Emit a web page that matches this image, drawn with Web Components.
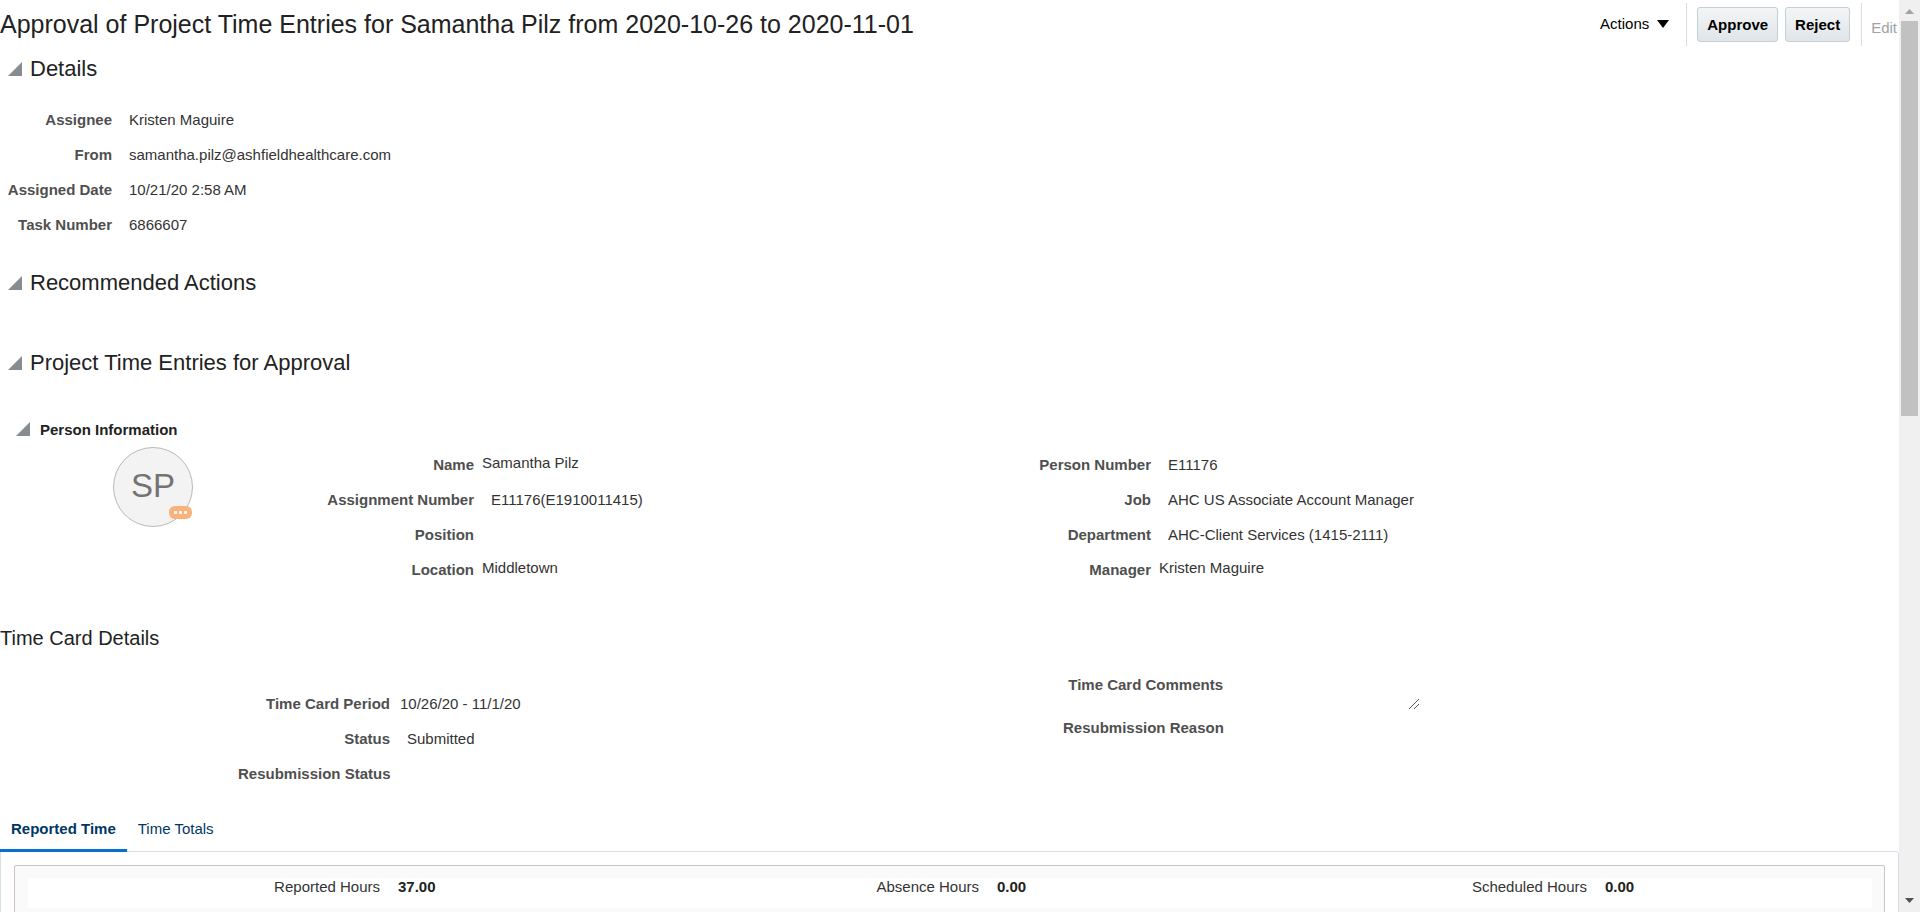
<!DOCTYPE html>
<html lang="en">
<head>
<meta charset="utf-8">
<meta name="viewport" content="width=device-width, initial-scale=1">
<title>Approval of Project Time Entries</title>
<style>
  body { margin: 0; background: #fff; color: #333; font: 15px "Liberation Sans", Arial, sans-serif; }
  .details { padding: 13px 0 21px; --label-width: 112px; }
  .empty { padding-bottom: 40px; }
  .gap { padding-bottom: 29px; }
  .person { display: grid; grid-template-columns: 327fr 712fr 860fr; padding-bottom: 36px; }
  .person person-avatar { margin-left: 113px; }
  .person .left { --label-width: 147px; }
  .person .right { --label-width: 112px; }
  h2 { margin: 0; font-size: 20px; line-height: 30px; font-weight: 400; color: #222; }
  .card { display: grid; grid-template-columns: 238fr 825fr 836fr; padding-bottom: 20px; }
  .card .left { grid-column: 2; padding-top: 33px; --label-width: 152px; }
  .card .right { padding-top: 14px; --label-width: 160px; }
</style>
</head>
<body>
<approval-page>
  <task-header>Approval of Project Time Entries for Samantha Pilz from 2020-10-26 to 2020-11-01</task-header>
  <section-header>Details</section-header>
  <div class="details">
    <field-row label="Assignee">Kristen Maguire</field-row>
    <field-row label="From">samantha.pilz@ashfieldhealthcare.com</field-row>
    <field-row label="Assigned Date">10/21/20 2:58 AM</field-row>
    <field-row label="Task Number">6866607</field-row>
  </div>
  <section-header class="empty">Recommended Actions</section-header>
  <section-header class="gap">Project Time Entries for Approval</section-header>
  <section-header minor>Person Information</section-header>
  <div class="person">
    <person-avatar>SP</person-avatar>
    <div class="left">
      <field-row label="Name" linked>Samantha Pilz</field-row>
      <field-row label="Assignment Number">E11176(E1910011415)</field-row>
      <field-row label="Position"></field-row>
      <field-row label="Location" linked>Middletown</field-row>
    </div>
    <div class="right">
      <field-row label="Person Number">E11176</field-row>
      <field-row label="Job">AHC US Associate Account Manager</field-row>
      <field-row label="Department">AHC-Client Services (1415-2111)</field-row>
      <field-row label="Manager" linked>Kristen Maguire</field-row>
    </div>
  </div>
  <h2>Time Card Details</h2>
  <div class="card">
    <div class="left">
      <field-row label="Time Card Period" near>10/26/20 - 11/1/20</field-row>
      <field-row label="Status">Submitted</field-row>
      <field-row label="Resubmission Status"></field-row>
    </div>
    <div class="right">
      <comment-row label="Time Card Comments"></comment-row>
      <field-row label="Resubmission Reason"></field-row>
    </div>
  </div>
  <time-tabs></time-tabs>
  <hours-summary></hours-summary>
</approval-page>

<script>
const define = (name, html, setup) => {
  const template = document.createElement('template');
  template.innerHTML = html;
  customElements.define(name, class extends HTMLElement {
    constructor() {
      super();
      this.attachShadow({ mode: 'open' }).append(template.content.cloneNode(true));
    }
    connectedCallback() { if (setup) setup(this, this.shadowRoot); }
  });
};
const setLabel = (host, root) => {
  root.querySelector('.label').textContent = host.getAttribute('label');
};

define('approval-page', `
  <style>
    :host { display: flex; height: 100vh; overflow: hidden; }
    main { flex: 1; min-width: 0; overflow-y: auto; scrollbar-width: none; }
  </style>
  <main><slot></slot></main>
  <page-scrollbar></page-scrollbar>`);

define('page-scrollbar', `
  <style>
    :host { display: flex; flex-direction: column; width: 21px; background: #f0f0f0; }
    svg { display: block; width: 21px; height: 21px; }
    .track { flex: 1; display: grid; grid-template-rows: 395fr 475fr; padding: 0 2px; }
    .thumb { background: #c1c1c1; }
  </style>
  <svg viewBox="0 0 21 21" aria-hidden="true"><path d="M6 14h9L10.500 9z" fill="#a3a3a3"/></svg>
  <div class="track"><div class="thumb"></div></div>
  <svg viewBox="0 0 21 21" aria-hidden="true"><path d="M6 7h9l-4.500 5z" fill="#505050"/></svg>`);

define('task-header', `
  <style>
    :host { display: flex; justify-content: space-between; min-height: 49px; }
    h1 { margin: 0; font-size: 25px; line-height: 48px; font-weight: 400; color: #222; white-space: nowrap; }
    .bar { display: flex; align-items: flex-start; padding: 3px 2px 0 0; }
    button { font: inherit; color: #000; cursor: pointer; }
    .menu { display: flex; align-items: center; gap: 8px; height: 43px; padding: 0 0 2px; border: 0; background: none; margin-right: 17px; }
    .rule { width: 1px; height: 43px; background: #d6dfe6; }
    .push { box-sizing: border-box; height: 35px; margin-top: 4px; padding: 0 9px; border: 1px solid #c4ced7;
      border-radius: 3px; background: linear-gradient(#f3f5f6, #e1e5e8); font-weight: 700; }
    .first { margin: 4px 7px 0 10px; }
    .last { margin-right: 11px; }
    .edit { padding: 6px 0 0; border: 0; background: none; height: 43px; margin-left: 9px; color: #a0a2a4; }
  </style>
  <h1><slot></slot></h1>
  <div class="bar">
    <button class="menu" type="button">Actions
      <svg width="12" height="9" viewBox="0 0 12 9" aria-hidden="true"><path d="M0 1h12L6 9z"/></svg></button>
    <span class="rule"></span>
    <button class="push first" type="button">Approve</button>
    <button class="push last" type="button">Reject</button>
    <span class="rule"></span>
    <button class="edit" type="button" disabled>Edit</button>
  </div>`);

define('section-header', `
  <style>
    :host { display: block; color: #222; }
    h2 { display: flex; align-items: center; gap: 8px; margin: 0; padding-left: 8px; font-size: 22px; line-height: 40px; font-weight: 400; }
    button { display: block; padding: 0; border: 0; background: none; cursor: pointer; }
    svg { display: block; width: 14px; height: 14px; }
    :host([minor]) h2 { gap: 10px; padding-left: 16px; font-size: 15px; line-height: 35px; font-weight: 700; }
    :host([minor]) button { padding-bottom: 2px; }
  </style>
  <h2><button type="button" aria-label="Collapse section" aria-expanded="true">
    <svg viewBox="0 0 14 14"><path d="M14 0v14H0z" fill="#878c90"/></svg></button><slot></slot></h2>`);

define('field-row', `
  <style>
    :host { display: flex; min-height: 35px; line-height: 35px; white-space: nowrap; }
    .label { width: var(--label-width); text-align: right; font-weight: 700; color: #4f4f4f; }
    .value { padding-left: 17px; }
    :host([near]) .value { padding-left: 10px; }
    :host([linked]) .value { padding-left: 8px; line-height: 31px; }
  </style>
  <span class="label"></span><span class="value"><slot></slot></span>`, setLabel);

define('comment-row', `
  <style>
    :host { display: flex; height: 43px; line-height: 35px; white-space: nowrap; }
    .label { width: var(--label-width); text-align: right; font-weight: 700; color: #4f4f4f; }
    .box { position: relative; width: 189px; margin-left: 9px; }
    textarea { box-sizing: border-box; width: 100%; height: 43px; margin: 0; padding: 8px; border: 0;
      background: transparent; color: inherit; font: inherit; resize: none; outline: 0; }
    svg { position: absolute; right: 1px; bottom: 0; width: 12px; height: 12px; pointer-events: none; }
  </style>
  <label class="label" for="comments"></label>
  <div class="box"><textarea id="comments" readonly></textarea>
    <svg viewBox="0 0 12 12" aria-hidden="true"><path d="M1 11L11 1M6 11l5-5" stroke="#555" fill="none"/></svg></div>`, setLabel);

define('person-avatar', `
  <style>
    :host { position: relative; display: block; box-sizing: border-box; width: 80px; height: 80px; border: 1px solid #b9b9b9;
      border-radius: 50%; background: #f3f3f3; color: #737373; font-size: 33px; line-height: 76px; text-align: center; }
    svg { position: absolute; right: 0; bottom: 7px; width: 23px; height: 13px; }
  </style>
  <slot></slot>
  <svg viewBox="0 0 23 13" role="img" aria-label="Presence"><rect width="23" height="13" rx="6" fill="#f9b27c"/>
    <path d="M5 5h3v3H5zM10 5h3v3h-3zM15 5h3v3h-3z" fill="#fff" opacity=".85"/></svg>`);

define('time-tabs', `
  <style>
    :host { display: block; }
    [role=tablist] { display: flex; }
    button { box-sizing: border-box; height: 41px; padding: 0 11px 3px; border: 0; border-bottom: 3px solid transparent;
      background: none; font: inherit; line-height: 35px; color: #003764; cursor: pointer; }
    button[aria-selected=true] { border-color: #0572ce; font-weight: 700; }
  </style>
  <div role="tablist">
    <button type="button" role="tab" aria-selected="true">Reported Time</button>
    <button type="button" role="tab" aria-selected="false">Time Totals</button>
  </div>`);

define('hours-summary', `
  <style>
    :host { display: block; margin-top: -1px; padding: 13px 13px 200px; border: 1px solid #d6dfe6; border-radius: 0 3px 0 0; }
    .box { padding: 12px 12px 12px 13px; border: 1px solid #c4c6c8; border-radius: 2px; background: #fafafa; }
    dl { display: grid; grid-template-columns: 352fr 247fr 352fr 256fr 352fr 285fr; margin: 0; padding-bottom: 13px;
      background: #fff; line-height: 17px; white-space: nowrap; }
    dt { text-align: right; }
    dd { margin: 0; padding-left: 18px; font-weight: 700; color: #222; }
  </style>
  <div class="box">
    <dl>
      <dt>Reported Hours</dt><dd>37.00</dd>
      <dt>Absence Hours</dt><dd>0.00</dd>
      <dt>Scheduled Hours</dt><dd>0.00</dd>
    </dl>
  </div>`);
</script>
</body>
</html>
